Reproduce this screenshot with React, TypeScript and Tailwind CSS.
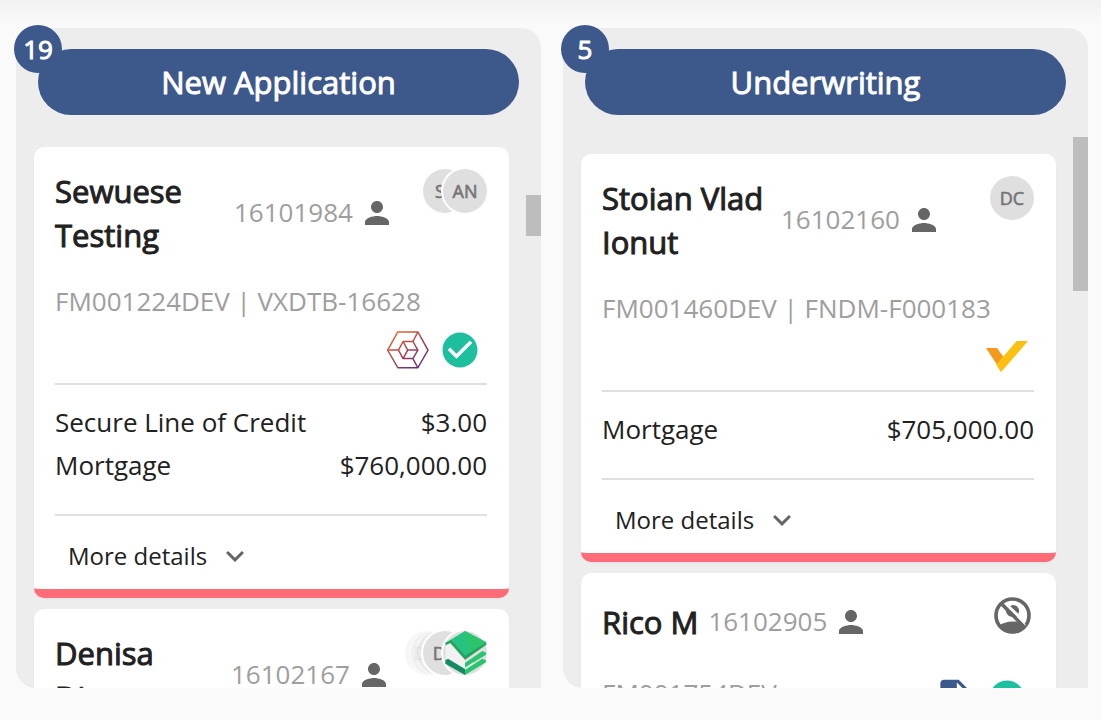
import { ReactNode } from "react";
import { MdCheckCircle, MdExpandMore, MdInsertDriveFile, MdPerson } from "react-icons/md";

type Loan = { product: string; amount: string };

type Application = {
  name: string;
  id: string;
  reference: string;
  avatars: ReactNode;
  badges: ReactNode;
  loans: Loan[];
  nameClass?: string;
};

function Initials({ text, className = "" }: { text?: string; className?: string }) {
  return (
    <span
      className={`relative flex size-11 shrink-0 items-center justify-center rounded-full bg-[#dfdfdf] text-[18px] leading-6 text-[#757575] ring-2 ring-white [-webkit-text-stroke:0.6px_#757575] ${className}`}
    >
      {text}
    </span>
  );
}

function HouseAvatar() {
  return (
    <span className="relative -ml-6 size-11 shrink-0 rounded-full bg-[#dfdfdf] ring-2 ring-white">
      <svg viewBox="307 152 132 132" className="size-11" role="img" aria-label="Lender">
        <path d="M326 188L373 236V266L315 240V194Z" fill="#f1f1f1" />
        <path d="M373 152L437 186L373 230L334 183L315 194V187Z" fill="#26c281" />
        <path d="M373 152L437 186L385 222Z" fill="#2bc36c" />
        <path d="M315 187L332 179L373 226L437 186V193L373 238L329 188L315 195Z" fill="#25a35c" />
        <path d="M373 248L425 212L436 217V223L373 262Z" fill="#2ac46f" />
        <path d="M373 268L425 235L436 240V246L373 284Z" fill="#2ac46f" />
        <path d="M373 262L398 246V251L373 268Z" fill="#e4efe8" />
        <path d="M314 240L322 235L373 266V284L314 250Z" fill="#158a64" />
      </svg>
    </span>
  );
}

function NoPerson() {
  return (
    <span className="flex size-11 items-start justify-center pt-[2px]">
      <svg viewBox="280 51 112 112" className="size-[37px]" role="img" aria-label="Unassigned">
        <circle cx="336" cy="107" r="50" fill="none" stroke="#666" strokeWidth="11" />
        <path d="M293 139Q312 125 336 125H348L376 142Q360 161 336 161Q310 161 293 139Z" fill="#666" />
        <path d="M329 78Q341 72 350 80Q359 89 354 102Z" fill="#666" />
        <path d="M301 70L374 143" stroke="#666" strokeWidth="11" />
        <path d="M315 90Q318 108 334 111L340 112Z" fill="#666" />
        <path d="M350 111L376 137" stroke="#fff" strokeWidth="3" />
      </svg>
    </span>
  );
}

function BadgeSlot({ children }: { children: ReactNode }) {
  return <span className="flex size-11 items-center justify-center">{children}</span>;
}

function HexBadge() {
  return (
    <BadgeSlot>
      <svg viewBox="51 64 128 115" className="w-[42px]" fill="none" stroke="url(#hex)" strokeWidth="4.5" strokeLinejoin="round">
        <defs>
          <linearGradient id="hex" gradientUnits="userSpaceOnUse" x1="75" y1="67" x2="155" y2="176">
            <stop offset="0" stopColor="#ee6930" />
            <stop offset="0.5" stopColor="#a8404f" />
            <stop offset="1" stopColor="#5b2d87" />
          </linearGradient>
        </defs>
        <path d="M84 67H145L176 122L145 176H84L53 122Z" />
        <path d="M100 96H130L145 122L130 148H100L86 122Z" />
        <path d="M53 122H86M145 67L130 96M145 176L130 148M100 96L114 122H145M114 122L100 148" />
      </svg>
    </BadgeSlot>
  );
}

function CheckBadge() {
  return (
    <BadgeSlot>
      <MdCheckCircle className="size-[42px] text-[#1dbf9f]" />
    </BadgeSlot>
  );
}

function TickBadge() {
  return (
    <BadgeSlot>
      <svg viewBox="79 66 126 94" className="w-[42px]">
        <path d="M79 87H112L131 113L112 137Z" fill="#f39a1d" />
        <path d="M171 66H205L124 160L110 137Z" fill="#fdc010" />
      </svg>
    </BadgeSlot>
  );
}

function Card({ app }: { app: Application }) {
  return (
    <article className="shrink-0 overflow-hidden rounded-[10px] border-b-9 border-[#ff6b76] bg-white shadow-xs">
      <div className="pt-[22px] pr-[22px] pl-[21px]">
        <div className="flex min-h-[54px] items-center">
          <h3 className={`text-[31px] leading-[44px] text-[#212121] [-webkit-text-stroke:1px_#212121] ${app.nameClass ?? ""}`}>
            {app.name}
          </h3>
          <span className="ml-[10px] pb-[3px] text-[26px] leading-9 text-[#9e9e9e]">{app.id}</span>
          <MdPerson className="ml-[6px] size-9 shrink-0 text-[#666]" />
          <div className="ml-auto flex self-start">{app.avatars}</div>
        </div>
        <div className="mt-[22px] flex flex-wrap items-start gap-x-4">
          <p className="text-[26px] leading-[44px] whitespace-nowrap text-[#9e9e9e]">{app.reference}</p>
          <div className="mt-[5px] ml-auto flex gap-2 pr-[5px]">{app.badges}</div>
        </div>
        <dl className="mt-[11px] border-y-2 border-[#e0e0e0] pt-4 pb-[27px]">
          {app.loans.map((loan) => (
            <div key={loan.product} className="flex justify-between text-[26px] leading-[43px] text-[#212121]">
              <dt>{loan.product}</dt>
              <dd>{loan.amount}</dd>
            </div>
          ))}
        </dl>
        <div className="flex h-[73px] items-center pt-[6px] pl-[13px]">
          <button type="button" className="flex items-center gap-[10px] text-[24px] leading-9 text-[#212121]">
            More details
            <MdExpandMore className="size-9 text-[#666]" />
          </button>
        </div>
      </div>
    </article>
  );
}

type ColumnProps = {
  title: string;
  count: number;
  applications: Application[];
  listClass: string;
  thumbClass: string;
};

function Column({ title, count, applications, listClass, thumbClass }: ColumnProps) {
  return (
    <section className="flex min-w-0 flex-1 flex-col rounded-[20px] rounded-br-none bg-[#ededed] pt-[21px]">
      <header className="relative mx-[22px] rounded-full bg-[#3d588a] text-center text-white">
        <h2 className="text-[31px] leading-[66px] [-webkit-text-stroke:1px_#fff]">{title}</h2>
        <span className="absolute -top-6 -left-6 flex size-12 items-center justify-center rounded-full bg-[#3d588a] text-[26px] leading-9 [-webkit-text-stroke:1px_#fff]">
          {count}
        </span>
      </header>
      <div className="mt-[22px] flex min-h-0 flex-1">
        <div className={`flex min-w-0 flex-1 flex-col gap-[11px] overflow-hidden pr-[17px] pl-[18px] ${listClass}`}>
          {applications.map((app) => (
            <Card key={app.id} app={app} />
          ))}
        </div>
        <div className="w-[15px] shrink-0">
          <div className={`bg-[#bdbdbd] ${thumbClass}`} />
        </div>
      </div>
    </section>
  );
}

const newApplications: Application[] = [
  {
    name: "Sewuese Testing",
    id: "16101984",
    reference: "FM001224DEV | VXDTB-16628",
    nameClass: "w-[169px]",
    avatars: (
      <>
        <Initials text="ST" />
        <Initials text="AN" className="-ml-6" />
      </>
    ),
    badges: (
      <>
        <HexBadge />
        <CheckBadge />
      </>
    ),
    loans: [
      { product: "Secure Line of Credit", amount: "$3.00" },
      { product: "Mortgage", amount: "$760,000.00" },
    ],
  },
  {
    name: "Denisa Diana",
    id: "16102167",
    reference: "FM001226DEV",
    nameClass: "w-[166px]",
    avatars: (
      <>
        <Initials text="DD" className="opacity-25" />
        <Initials className="-ml-[38px] opacity-25" />
        <Initials className="-ml-[38px] opacity-40" />
        <Initials text="DC" className="-ml-[38px]" />
        <HouseAvatar />
      </>
    ),
    badges: <CheckBadge />,
    loans: [{ product: "Mortgage", amount: "$500,000.00" }],
  },
];

const underwriting: Application[] = [
  {
    name: "Stoian Vlad Ionut",
    id: "16102160",
    reference: "FM001460DEV | FNDM-F000183",
    nameClass: "w-[169px]",
    avatars: <Initials text="DC" />,
    badges: <TickBadge />,
    loans: [{ product: "Mortgage", amount: "$705,000.00" }],
  },
  {
    name: "Rico M",
    id: "16102905",
    reference: "FM001754DEV",
    avatars: <NoPerson />,
    badges: (
      <>
        <BadgeSlot>
          <MdInsertDriveFile className="size-11 text-[#3d588a]" />
        </BadgeSlot>
        <CheckBadge />
      </>
    ),
    loans: [{ product: "Mortgage", amount: "$420,000.00" }],
  },
];

export default function App() {
  return (
    <main className="h-screen bg-[#fafafa] bg-[linear-gradient(#f1f1f1,#fafafa_24px)] font-['Open_Sans','Noto_Sans',sans-serif]">
      <div className="flex h-full gap-[22px] pt-7 pr-[13px] pb-8 pl-4">
        <Column
          title="New Application"
          count={19}
          applications={newApplications}
          listClass="pt-[10px]"
          thumbClass="mt-[58px] h-[41px]"
        />
        <Column
          title="Underwriting"
          count={5}
          applications={underwriting}
          listClass="pt-[17px]"
          thumbClass="h-[154px]"
        />
      </div>
    </main>
  );
}
